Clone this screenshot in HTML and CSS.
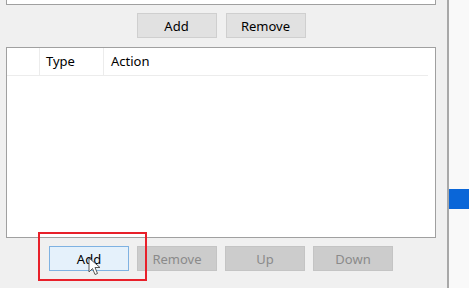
FILE: index.html
```html
<!DOCTYPE html>
<html>

<head>
    <title>Actions</title>
    <link rel="stylesheet" href="styles.css">
</head>

<body>
    <div class="window">
        <div class="panel">
            <div class="top-box"></div>
            <div class="button-row top-buttons">
                <button class="btn">Add</button>
                <button class="btn">Remove</button>
            </div>
            <div class="list">
                <div class="list-header">
                    <div class="col col-check"></div>
                    <div class="col col-type">Type</div>
                    <div class="col col-action">Action</div>
                </div>
            </div>
            <div class="button-row bottom-buttons">
                <button class="btn btn-hover">Add</button>
                <button class="btn" disabled>Remove</button>
                <button class="btn" disabled>Up</button>
                <button class="btn" disabled>Down</button>
            </div>
        </div>
        <div class="divider"></div>
        <div class="side">
            <div class="side-bar"></div>
        </div>
    </div>

    <div class="highlight"></div>
    <svg class="cursor" width="14" height="20" viewBox="0 0 14 20">
        <path d="M1 1 L1 15 L4.5 11.5 L7 17.5 L9.5 16.5 L7 10.5 L12 10.5 Z" fill="#fff" stroke="#555" stroke-width="1" stroke-linejoin="round"/>
    </svg>
</body>
</html>
```

FILE: styles.css
```css
body {
    margin: 0;
    background-color: #f9f9f9;
    font-family: "Noto Sans", "Open Sans", sans-serif;
    font-size: 13px;
    color: #000;
}

.window {
    display: flex;
    height: 288px;
}

.panel {
    width: 430px;
    padding-left: 6px;
    padding-right: 11px;
    background-color: #f0f0f0;
    display: flex;
    flex-direction: column;
}

.top-box {
    height: 4px;
    border: 1px solid #a0a0a0;
    border-top: none;
    background-color: #fff;
}

.button-row {
    display: flex;
}

.top-buttons {
    justify-content: center;
    gap: 9px;
    margin-top: 8px;
}

.bottom-buttons {
    gap: 8px;
    margin-top: 8px;
    padding-left: 43px;
}

.btn {
    width: 80px;
    height: 25px;
    padding: 0;
    font-family: inherit;
    font-size: 13px;
    color: #000;
    background-color: #e1e1e1;
    border: 1px solid #cfcfcf;
}

.btn:disabled {
    color: #8a8a8a;
    background-color: #cccccc;
    border-color: #c4c4c4;
}

.btn-hover {
    background-color: #e5f1fb;
    border-color: #7fb2e2;
}

.list {
    margin-top: 9px;
    height: 189px;
    background-color: #fff;
    border: 1px solid #a0a0a0;
}

.list-header {
    display: flex;
    height: 27px;
    margin-right: 7px;
    border-bottom: 1px solid #ececec;
}

.col {
    line-height: 27px;
    border-right: 1px solid #ececec;
}

.col-check {
    width: 32px;
}

.col-type {
    width: 57px;
    padding-left: 6px;
}

.col-action {
    flex: 1;
    padding-left: 7px;
    border-right: none;
}

.divider {
    width: 2px;
    background-color: #a8a8a8;
}

.side {
    flex: 1;
}

.side-bar {
    margin-top: 189px;
    height: 20px;
    background-color: #0a66d8;
}

.highlight {
    position: absolute;
    left: 38px;
    top: 232px;
    width: 105px;
    height: 45px;
    border: 2px solid #e8202a;
}

.cursor {
    position: absolute;
    left: 88px;
    top: 257px;
}
```
